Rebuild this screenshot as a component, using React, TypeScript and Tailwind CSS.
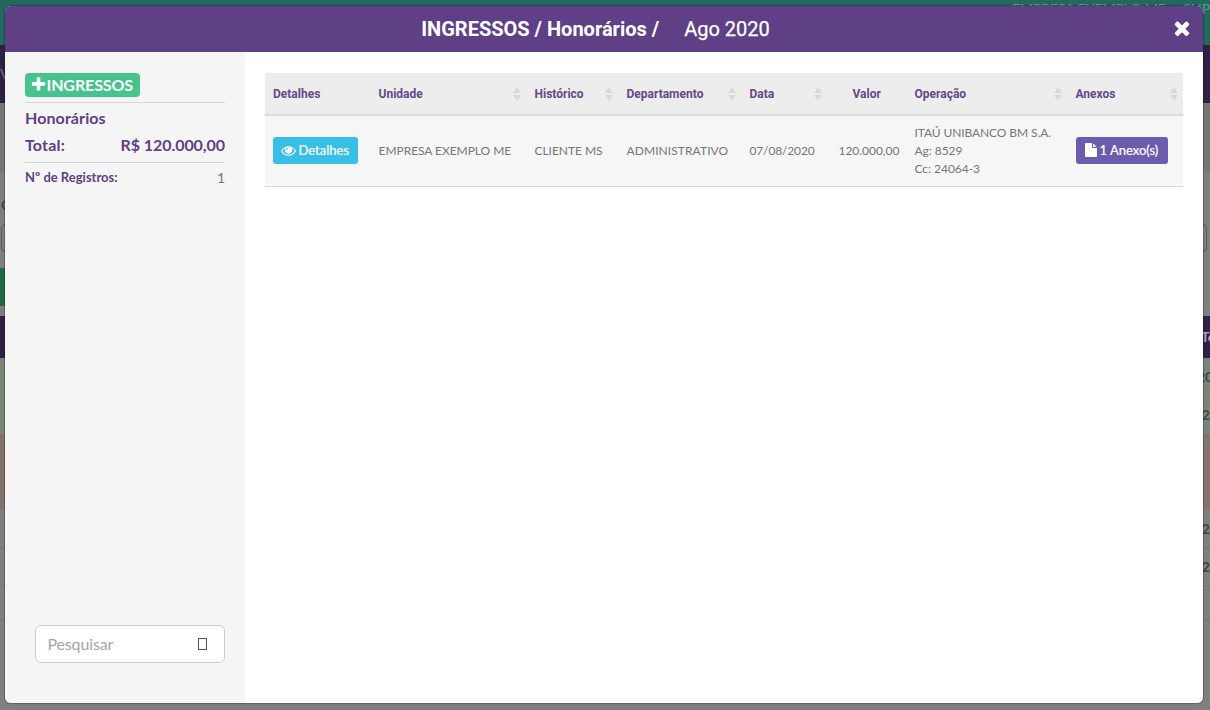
import type { ReactNode } from 'react';

const PLUS =
  'M1600 736v192q0 40-28 68t-68 28h-416v416q0 40-28 68t-68 28h-192q-40 0-68-28t-28-68v-416h-416q-40 0-68-28t-28-68v-192q0-40 28-68t68-28h416v-416q0-40 28-68t68-28h192q40 0 68 28t28 68v416h416q40 0 68 28t28 68z';
const CLOSE =
  'M1490 1322q0 40-28 68l-136 136q-28 28-68 28t-68-28l-294-294-294 294q-28 28-68 28t-68-28l-136-136q-28-28-28-68t28-68l294-294-294-294q-28-28-28-68t28-68l136-136q28-28 68-28t68 28l294 294 294-294q28-28 68-28t68 28l136 136q28 28 28 68t-28 68l-294 294 294 294q28 28 28 68z';
const EYE =
  'M1664 960q-152-236-381-353 61 104 61 225 0 185-131.5 316.5t-316.5 131.5-316.5-131.5-131.5-316.5q0-121 61-225-229 117-381 353 133 205 333.5 326.5t434.5 121.5 434.5-121.5 333.5-326.5zm-720-384q0-20-14-34t-34-14q-125 0-214.5 89.5t-89.5 214.5q0 20 14 34t34 14 34-14 14-34q0-86 61-147t147-61q20 0 34-14t14-34zm848 384q0 34-20 69-140 230-376.5 368.5t-499.5 138.5-499.5-139-376.5-368q-20-35-20-69t20-69q140-229 376.5-368t499.5-139 499.5 139 376.5 368q20 35 20 69z';
const FILE =
  'M1152 512v-472q22 14 36 28l408 408q14 14 28 36h-472zm-128 32q0 40 28 68t68 28h544v1056q0 40-28 68t-68 28h-1344q-40 0-68-28t-28-68v-1600q0-40 28-68t68-28h800v544z';

function Icon({ path, box, className }: { path: string; box: string; className: string }) {
  return (
    <svg viewBox={box} fill="currentColor" className={className} aria-hidden="true">
      <path d={path} />
    </svg>
  );
}

function SortArrows({ className = '' }: { className?: string }) {
  return (
    <svg viewBox="0 0 8 14" fill="#d9d9db" className={`mt-px h-3.5 w-2 shrink-0 ${className}`} aria-hidden="true">
      <path d="M4 0 8 6H0zM4 14 0 8h8z" />
    </svg>
  );
}

function Th({
  children,
  sortable = true,
  arrows,
}: {
  children: ReactNode;
  sortable?: boolean;
  arrows?: string;
}) {
  return (
    <th className="h-[42px] border-b-2 border-[#dcdcde] py-0 pr-[5px] pl-2 text-left font-['Roboto',sans-serif] text-xs font-bold text-[#654889]">
      <div className="flex items-center justify-between">
        <span>{children}</span>
        {sortable && <SortArrows className={arrows} />}
      </div>
    </th>
  );
}

function Backdrop() {
  return (
    <div className="flex h-full flex-col overflow-hidden bg-[#7f7f7f] text-sm font-bold text-[#444]">
      <div className="flex h-[45px] shrink-0 justify-end bg-[#22685f]">
        <div className="flex gap-4 pt-px text-[14px] leading-4 font-normal tracking-[-0.1px] whitespace-nowrap text-[#67958c]">
          <span>EMPRESA EXEMPLO ME</span>
          <span>CHP</span>
        </div>
      </div>
      <div className="flex h-[58px] shrink-0 items-center bg-[#2f2045] font-normal text-[#77708a]">V</div>
      <div className="h-[69px] shrink-0 bg-[#767676]" />
      <div className="flex h-[52px] shrink-0 items-end pb-[7px]">
        <span className="ml-px h-6 leading-6">C</span>
      </div>
      <div className="mr-[3px] ml-px h-7 shrink-0 rounded border border-[#5b5b5b]" />
      <div className="mt-4 h-[38px] w-1/2 shrink-0 bg-[#216849]" />
      <div className="mt-[10px] flex h-[42px] shrink-0 items-center justify-end bg-[#2f2045] text-[#a9a4b2]">
        <span className="w-[9px]">To</span>
      </div>
      <div className="flex h-[38px] shrink-0 items-center justify-end border-b border-[#747e72] bg-[#7a8478]">
        <span className="w-[13px]">20</span>
      </div>
      <div className="flex h-[38px] shrink-0 items-center justify-end bg-[#7a8478]">42</div>
      <div className="h-[76px] shrink-0 bg-[#847371]" />
      <div className="flex h-[38px] shrink-0 items-center justify-end border-b border-[#747474]">42</div>
      <div className="flex h-[38px] shrink-0 items-center justify-end border-b border-[#747474]">42</div>
      <div className="h-[35px] shrink-0 border-b border-[#747474]" />
    </div>
  );
}

function Sidebar() {
  return (
    <aside className="flex w-60 flex-col bg-[#f5f5f5] px-5 pt-[21px] pb-10 text-[#5f4086]">
      <div className="border-b border-[#d5d5d5] pb-[5px]">
        <span className="flex h-6 w-[115px] items-center rounded bg-[#47c48d] pl-[4.5px] text-base font-bold tracking-[-0.1px] text-white">
          <Icon path={PLUS} box="0 0 1792 1792" className="-mt-px h-[17px] w-[17px]" />
          INGRESSOS
        </span>
      </div>
      <div className="border-b border-[#d5d5d5] text-base leading-[27px] font-bold">
        <div className="mt-px tracking-[0.1px]">Honorários</div>
        <div className="mb-[4px] flex justify-between">
          <span className="tracking-[0.2px]">Total:</span>
          <span className="tracking-[-0.05px]">R$ 120.000,00</span>
        </div>
      </div>
      <div className="flex justify-between pt-[3px] text-[13px] leading-[22px]">
        <span className="font-bold">Nº de Registros:</span>
        <span className="text-sm leading-[23px] text-[#777]">1</span>
      </div>
      <div className="mt-auto ml-[10px] flex h-[38px] items-center justify-between rounded-md border border-[#cccbc5] bg-white pr-[17px] pl-[11.5px] text-base tracking-[-0.15px] text-[#a5a5a5]">
        <span>Pesquisar</span>
        <span className="h-3 w-[9px] border border-[#584a80]" />
      </div>
    </aside>
  );
}

function Records() {
  return (
    <main className="flex-1 bg-white px-5 pt-[21px]">
      <table className="w-[918px] table-fixed border-collapse">
        <colgroup>
          <col className="w-[105px]" />
          <col className="w-[156px]" />
          <col className="w-[92px]" />
          <col className="w-[123px]" />
          <col className="w-[89px]" />
          <col className="w-[76px]" />
          <col className="w-[161px]" />
          <col className="w-[116px]" />
        </colgroup>
        <thead className="bg-[#ededed]">
          <tr className="[&>th:not(:first-child)>div>span]:translate-x-[0.5px]">
            <Th sortable={false}>Detalhes</Th>
            <Th>Unidade</Th>
            <Th>Histórico</Th>
            <Th>Departamento</Th>
            <Th arrows="mr-[3px]">Data</Th>
            <Th sortable={false}>
              <span className="pl-[14px]">Valor</span>
            </Th>
            <Th>Operação</Th>
            <Th>Anexos</Th>
          </tr>
        </thead>
        <tbody>
          <tr className="h-[71px] border-b border-[#d9dadb] bg-[#f6f6f6] text-xs leading-[18px] tracking-[-0.04px] whitespace-nowrap text-[#777] [&>td]:pr-[8px] [&>td]:pl-[8.5px]">
            <td>
              <button className="-ml-[0.5px] flex h-[27px] w-[85px] items-center rounded-[3px] bg-[#37bfe7] pb-px pl-2 text-[13px] tracking-normal text-white [-webkit-text-stroke:0.2px_white]">
                <Icon path={EYE} box="0 0 1792 1792" className="mr-[2.5px] h-[15px] w-[15px]" />
                Detalhes
              </button>
            </td>
            <td>EMPRESA EXEMPLO ME</td>
            <td>CLIENTE MS</td>
            <td className="tracking-[0.08px]">ADMINISTRATIVO</td>
            <td className="tracking-[-0.15px]">07/08/2020</td>
            <td className="text-right">
              <span className="mr-px">120.000,00</span>
            </td>
            <td>
              <span className="tracking-[-0.1px]">ITAÚ UNIBANCO BM S.A.</span>
              <br />
              Ag: 8529
              <br />
              Cc: 24064-3
            </td>
            <td>
              <button className="flex h-[27px] w-[92px] items-center rounded-[3px] bg-[#6d5bae] pb-px pl-2 text-[13px] tracking-normal text-white [-webkit-text-stroke:0.2px_white]">
                <Icon path={FILE} box="0 0 1664 1792" className="mr-[3px] h-[14px] w-[13px]" />1 Anexo(s)
              </button>
            </td>
          </tr>
        </tbody>
      </table>
    </main>
  );
}

export default function App() {
  return (
    <div className="relative h-[710px] w-[1210px] overflow-hidden font-['Lato',sans-serif]">
      <Backdrop />
      <div
        role="dialog"
        className="absolute top-[6px] left-[5px] flex h-[697px] w-[1198px] flex-col overflow-hidden rounded-[6px] bg-white shadow-[0_0_1px_1px_rgba(0,0,0,0.25)]"
      >
        <header className="grid h-[46px] shrink-0 grid-cols-[1fr_auto_1fr] items-center bg-[#5f4086] font-['Roboto',sans-serif] text-xl text-white">
          <span />
          <h1 className="flex gap-[25px] pr-[17px]">
            <span className="font-bold">INGRESSOS / Honorários /</span>
            <span className="[-webkit-text-stroke:0.25px_white]">Ago 2020</span>
          </h1>
          <button className="mr-[10px] justify-self-end" aria-label="Fechar">
            <Icon path={CLOSE} box="0 0 1792 1792" className="-mt-[3px] h-[22px] w-[22px]" />
          </button>
        </header>
        <div className="flex flex-1">
          <Sidebar />
          <Records />
        </div>
      </div>
    </div>
  );
}
